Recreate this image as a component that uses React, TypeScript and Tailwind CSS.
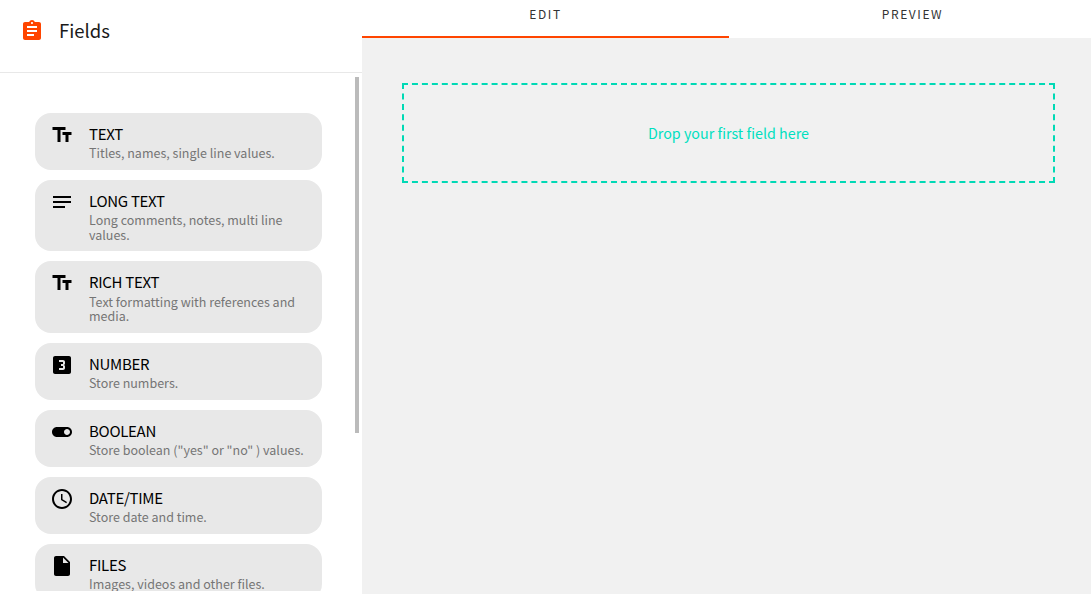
const fields = [
  {
    name: "TEXT",
    desc: "Titles, names, single line values.",
    icon: "M2.5 4v3h5v12h3V7h5V4h-13zm19 5h-9v3h3v7h3v-7h3V9z",
  },
  {
    name: "LONG TEXT",
    desc: "Long comments, notes, multi line values.",
    icon: "M3 18h12v-2H3v2zM3 6v2h18V6H3zm0 7h18v-2H3v2z",
  },
  {
    name: "RICH TEXT",
    desc: "Text formatting with references and media.",
    icon: "M2.5 4v3h5v12h3V7h5V4h-13zm19 5h-9v3h3v7h3v-7h3V9z",
  },
  {
    name: "NUMBER",
    desc: "Store numbers.",
    icon: "M19.01 3h-14c-1.1 0-2 .9-2 2v14c0 1.1.9 2 2 2h14c1.1 0 2-.9 2-2V5c0-1.1-.9-2-2-2zm-4 7.5c0 .83-.67 1.5-1.5 1.5.83 0 1.5.67 1.5 1.5V15c0 1.11-.9 2-2 2h-4v-2h4v-2h-2v-2h2V9h-4V7h4c1.1 0 2 .89 2 2v1.5z",
  },
  {
    name: "BOOLEAN",
    desc: 'Store boolean ("yes" or "no" ) values.',
    icon: "M17 7H7c-2.76 0-5 2.24-5 5s2.24 5 5 5h10c2.76 0 5-2.24 5-5s-2.24-5-5-5zm0 8c-1.66 0-3-1.34-3-3s1.34-3 3-3 3 1.34 3 3-1.34 3-3 3z",
  },
  {
    name: "DATE/TIME",
    desc: "Store date and time.",
    icon: "M11.99 2C6.47 2 2 6.48 2 12s4.47 10 9.99 10C17.52 22 22 17.52 22 12S17.52 2 11.99 2zM12 20c-4.42 0-8-3.58-8-8s3.58-8 8-8 8 3.58 8 8-3.58 8-8 8zM12.5 7H11v6l5.25 3.15.75-1.23-4.5-2.67z",
  },
  {
    name: "FILES",
    desc: "Images, videos and other files.",
    icon: "M6 2c-1.1 0-1.99.9-1.99 2L4 20c0 1.1.89 2 1.99 2H18c1.1 0 2-.9 2-2V8l-6-6H6zm7 7V3.5L18.5 9H13z",
  },
];

const FieldCard = ({ name, desc, icon }: { name: string; desc: string; icon: string }) => {
  return (
    <div className="shrink-0 flex gap-[15px] bg-[#e8e8e8] rounded-[16px] pl-[15px] pr-4 pt-[10px] pb-[9.4px]">
      <svg viewBox="0 0 24 24" className="w-6 h-6 shrink-0 fill-black">
        <path d={icon} />
      </svg>
      <div className="min-w-0">
        <div className="text-[15px] tracking-[-0.3px] leading-[21.7px] pb-[1.6px] text-black">{name}</div>
        <div className="text-[12.5px] leading-[14.3px] text-[#757575]">{desc}</div>
      </div>
    </div>
  );
};

export default function App() {
  return (
    <div className="flex h-[594px] w-[1091px] overflow-hidden bg-white font-['Noto_Sans_CJK_SC',sans-serif]">
      <aside className="relative w-[362px] shrink-0 flex flex-col">
        <header className="h-[73px] shrink-0 flex items-start gap-[15px] pl-5 pt-[19px] border-b border-[#e8e8e8]">
          <svg viewBox="0 0 24 24" className="w-6 h-6 fill-[#ff4500]">
            <path d="M19 3h-4.18C14.4 1.84 13.3 1 12 1c-1.3 0-2.4.84-2.82 2H5c-1.1 0-2 .9-2 2v14c0 1.1.9 2 2 2h14c1.1 0 2-.9 2-2V5c0-1.1-.9-2-2-2zm-7 0c.55 0 1 .45 1 1s-.45 1-1 1-1-.45-1-1 .45-1 1-1zm2 14H7v-2h7v2zm3-4H7v-2h10v2zm0-4H7V7h10v2z" />
          </svg>
          <h1 className="text-[18.5px] leading-[22px] text-[#1a1a1a]">Fields</h1>
        </header>
        <div className="h-[518px] flex flex-col gap-[10px] overflow-hidden pt-10 pl-[35px] pr-10">
          {fields.map((f) => (
            <FieldCard key={f.name} {...f} />
          ))}
        </div>
        {/* overlay scrollbar */}
        <div className="absolute left-[355px] top-[77px] w-[4px] h-[356px] bg-[#bbbbbb]" />
      </aside>
      <main className="flex-1 flex flex-col min-w-0">
        <nav className="h-[38px] shrink-0 flex text-xs tracking-[1.6px] text-[#333333] overflow-hidden">
          <div className="w-[367px] shrink-0 h-full pt-[6px] text-center leading-4 border-b-2 border-[#ff4500]">EDIT</div>
          <div className="w-[367px] shrink-0 h-full pt-[6px] text-center leading-4">PREVIEW</div>
        </nav>
        <div className="flex-1 bg-[#f1f1f1] pt-[45px] pl-10 pr-9">
          <div className="h-[100px] flex items-center justify-center border-2 border-dashed border-[#00d9b5] text-[14.3px] text-[#00e0bf]">
            Drop your first field here
          </div>
        </div>
      </main>
    </div>
  );
}
